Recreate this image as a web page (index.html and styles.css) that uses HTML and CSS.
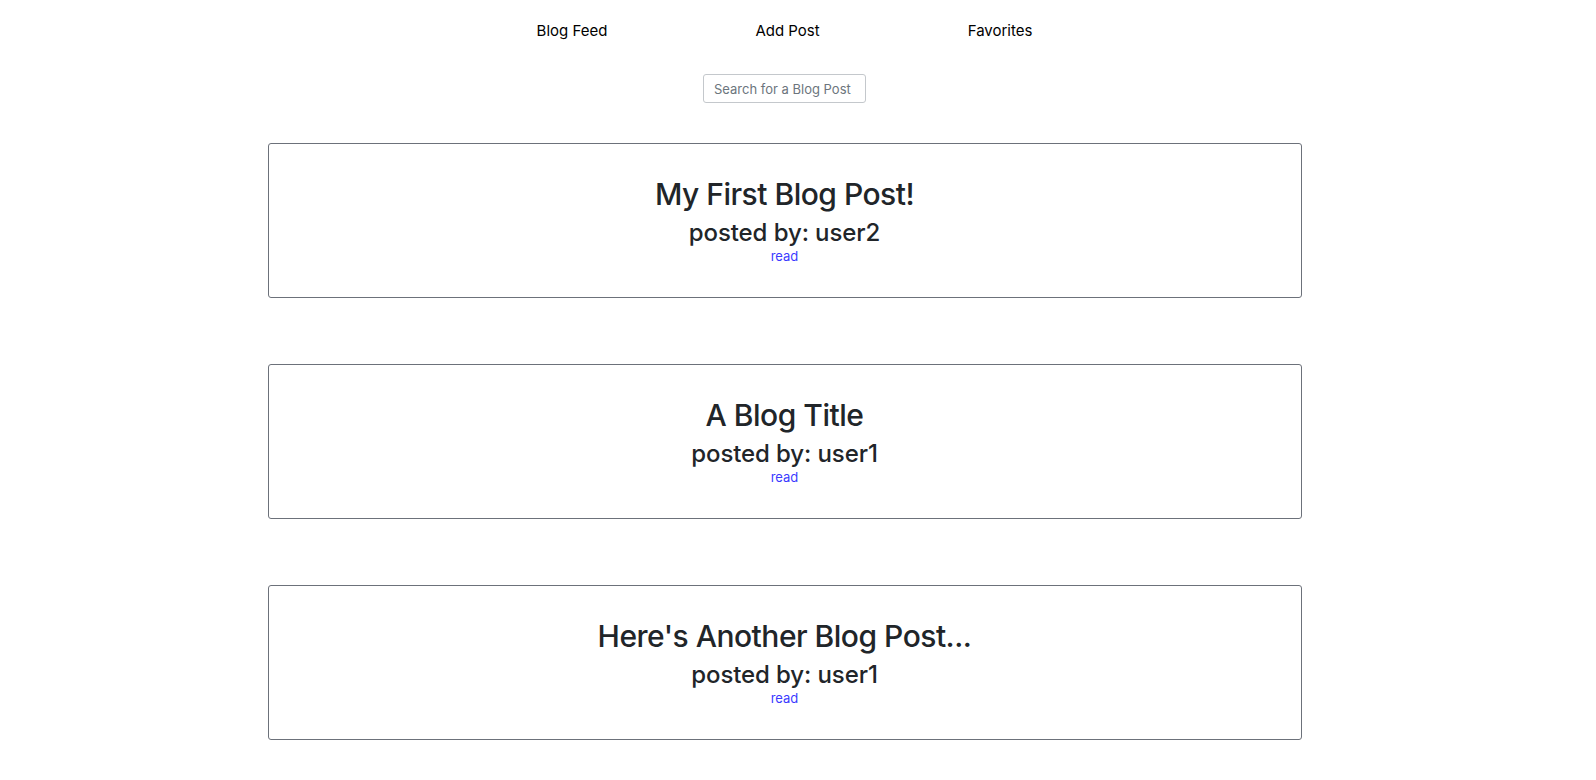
FILE: index.html
```html
<!DOCTYPE html>
<html>
<head>
<meta charset="utf-8">
<link rel="stylesheet" href="styles.css">
</head>
<body>
<div class="page">
  <nav class="nav">
    <a class="nav-link" href="#">Blog Feed</a>
    <a class="nav-link" href="#">Add Post</a>
    <a class="nav-link" href="#">Favorites</a>
  </nav>
  <div class="search-row">
    <input class="search" type="text" placeholder="Search for a Blog Post">
  </div>
  <div class="feed">
    <div class="card">
      <h2 class="title">My First Blog Post!</h2>
      <h4 class="author">posted by: user2</h4>
      <a class="read" href="#">read</a>
    </div>
    <div class="card">
      <h2 class="title">A Blog Title</h2>
      <h4 class="author">posted by: user1</h4>
      <a class="read" href="#">read</a>
    </div>
    <div class="card">
      <h2 class="title">Here's Another Blog Post...</h2>
      <h4 class="author">posted by: user1</h4>
      <a class="read" href="#">read</a>
    </div>
  </div>
</div>
</body>
</html>
```
FILE: styles.css
```css
html, body {
  margin: 0;
  padding: 0;
  background: #fff;
}
body {
  font-family: Inter, "Noto Sans", "Liberation Sans", sans-serif;
  color: #212529;
}
.page {
  width: 1569px;
}
.nav {
  display: flex;
  justify-content: center;
  gap: 148px;
  padding-top: 21px;
}
.nav-link {
  color: #000;
  text-decoration: none;
  font-size: 15px;
  line-height: 20px;
}
.search-row {
  display: flex;
  justify-content: center;
  margin-top: 33px;
}
.search {
  box-sizing: border-box;
  width: 163px;
  height: 29px;
  border: 1px solid #c4c8cc;
  border-radius: 3px;
  padding: 0 10px;
  font-family: inherit;
  font-size: 13px;
  color: #495057;
}
.search::placeholder {
  color: #6c757d;
}
.feed {
  display: flex;
  flex-direction: column;
  align-items: center;
  gap: 66px;
  margin-top: 40px;
}
.card {
  box-sizing: border-box;
  width: 1034px;
  height: 155px;
  border: 1px solid #6c717a;
  border-radius: 3px;
  display: flex;
  flex-direction: column;
  align-items: center;
  padding-top: 31px;
}
.title {
  margin: 0;
  font-size: 30px;
  font-weight: 500;
  letter-spacing: -0.5px;
  line-height: 38px;
}
.author {
  margin: 1px 0 0;
  font-size: 24px;
  font-weight: 500;
  letter-spacing: -0.1px;
  line-height: 38px;
}
.read {
  color: #3b3bff;
  text-decoration: none;
  font-size: 13px;
  line-height: 14px;
  margin-top: -3px;
}
```
